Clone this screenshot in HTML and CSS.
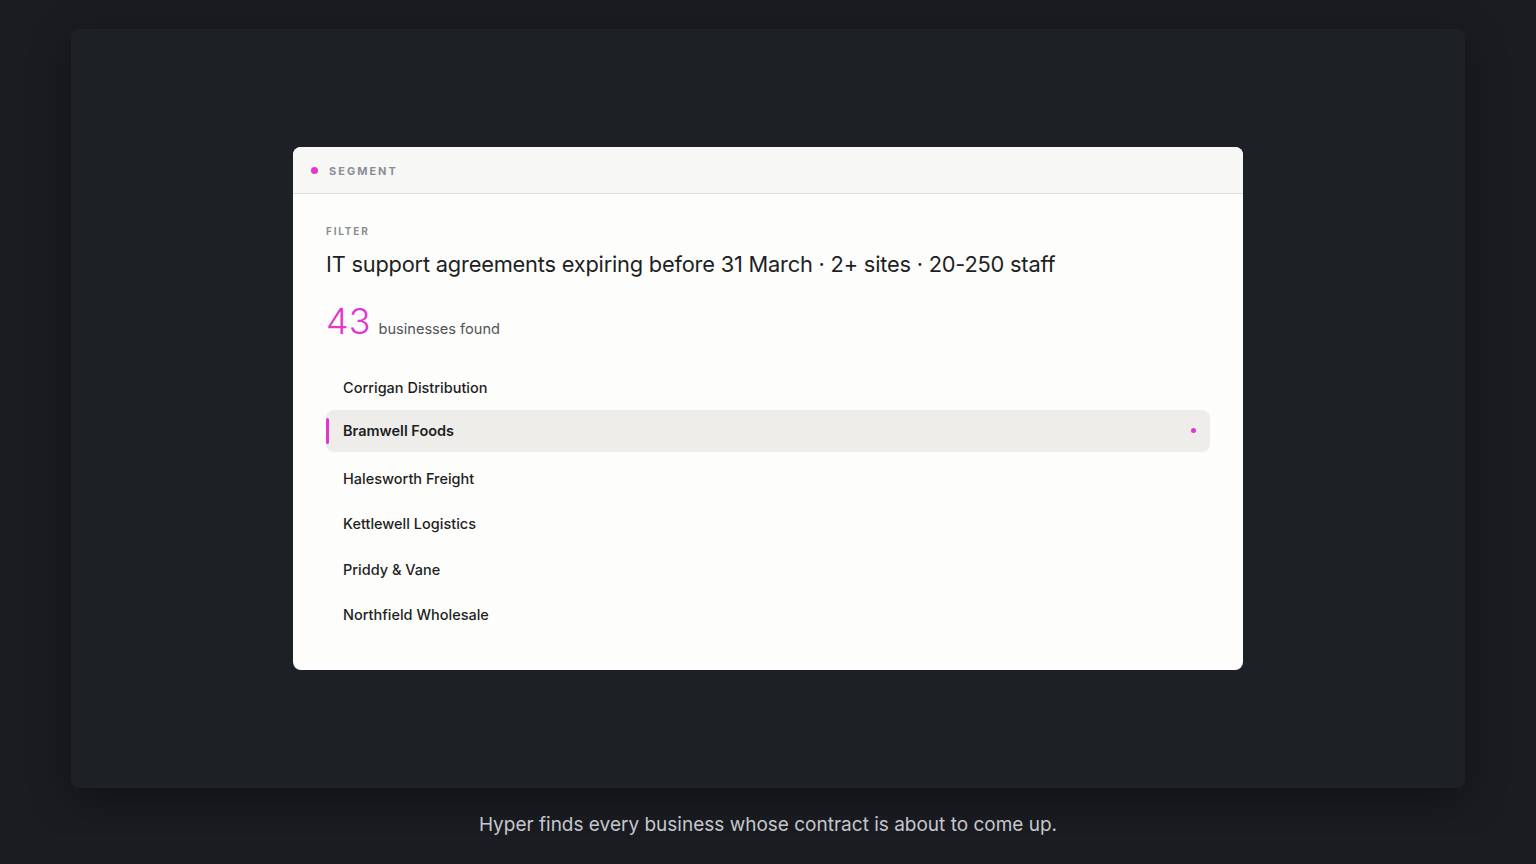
FILE: index.html
```html
<!DOCTYPE html>
<html lang="en">
<head>
    <meta charset="UTF-8">
    <meta name="viewport" content="width=device-width, initial-scale=1.0">
    <title>Hyper - Segment</title>
    <link rel="stylesheet" href="styles.css">
</head>
<body>
    <div class="stage">
        <div class="card">
            <div class="card-head">
                <span class="head-dot"></span>
                <span class="head-label">SEGMENT</span>
            </div>
            <div class="card-body">
                <div class="filter-label">FILTER</div>
                <div class="filter-text">IT support agreements expiring before 31 March · 2+ sites · 20-250 staff</div>
                <div class="count">
                    <span class="count-num">43</span>
                    <span class="count-text">businesses found</span>
                </div>
                <ul class="results">
                    <li class="result">Corrigan Distribution</li>
                    <li class="result active">Bramwell Foods<span class="result-dot"></span></li>
                    <li class="result">Halesworth Freight</li>
                    <li class="result">Kettlewell Logistics</li>
                    <li class="result">Priddy &amp; Vane</li>
                    <li class="result">Northfield Wholesale</li>
                </ul>
            </div>
        </div>
    </div>
    <p class="caption">Hyper finds every business whose contract is about to come up.</p>
</body>
</html>
```

FILE: styles.css
```css
body {
    margin: 0;
    padding: 29px 71px 0;
    background-color: #1a1c21;
    font-family: Inter, "Noto Sans", sans-serif;
}
.stage {
    height: 759px;
    background-color: #1d2025;
    border-radius: 8px;
    box-shadow: 0 12px 40px rgba(0, 0, 0, 0.35);
    display: flex;
    align-items: center;
    justify-content: center;
}
.card {
    width: 950px;
    background-color: #fdfdfb;
    border-radius: 8px;
    overflow: hidden;
}
.card-head {
    height: 45px;
    padding: 1px 0 0 18px;
    display: flex;
    align-items: center;
    gap: 11px;
    background-color: #f7f7f5;
    border-bottom: 1px solid #dddddb;
}
.head-dot {
    width: 7px;
    height: 7px;
    border-radius: 50%;
    background-color: #e236d0;
}
.head-label {
    font-size: 11px;
    font-weight: 700;
    letter-spacing: 2px;
    color: #8b8e95;
}
.card-body {
    padding: 31px 33px 34px;
}
.filter-label {
    font-size: 10px;
    font-weight: 700;
    letter-spacing: 1.8px;
    color: #8b8e95;
}
.filter-text {
    margin-top: 14px;
    font-size: 21.8px;
    color: #1d1f24;
    letter-spacing: -0.2px;
}
.count {
    margin-top: 22px;
    display: flex;
    align-items: baseline;
    gap: 8px;
}
.count-num {
    font-size: 36px;
    font-weight: 300;
    color: #e236d0;
    line-height: 44px;
}
.count-text {
    font-size: 14.6px;
    color: #50535a;
}
.results {
    list-style: none;
    margin: 23px 0 0;
    padding: 0;
    display: flex;
    flex-direction: column;
    gap: 3.5px;
}
.result {
    position: relative;
    height: 42px;
    display: flex;
    align-items: center;
    padding: 0 14px 0 17px;
    border-radius: 8px;
    font-size: 14.5px;
    font-weight: 500;
    color: #1d1f24;
}
.result.active {
    margin: -2px 0 2px;
    background-color: #efede9;
    font-weight: 600;
}
.result.active::before {
    content: "";
    position: absolute;
    left: 0;
    top: 8px;
    bottom: 8px;
    width: 3px;
    border-radius: 2px;
    background-color: #e236d0;
}
.result-dot {
    margin-left: auto;
    width: 5px;
    height: 5px;
    border-radius: 50%;
    background-color: #e236d0;
}
.caption {
    margin: 25px 0 0;
    text-align: center;
    font-size: 19px;
    color: #c4c7ce;
}
```
